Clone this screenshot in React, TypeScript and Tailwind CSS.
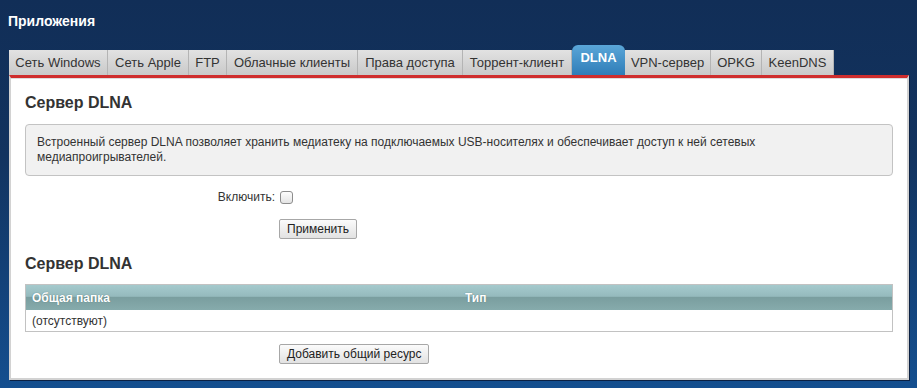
const tabs: { label: string; w: string; active?: boolean }[] = [
  { label: "Сеть Windows", w: "w-[99px]" },
  { label: "Сеть Apple", w: "w-[81px]" },
  { label: "FTP", w: "w-[38px]" },
  { label: "Облачные клиенты", w: "w-[131px]" },
  { label: "Права доступа", w: "w-[105px]" },
  { label: "Торрент-клиент", w: "w-[109px]" },
  { label: "DLNA", w: "w-[53px]", active: true },
  { label: "VPN-сервер", w: "w-[86px]" },
  { label: "OPKG", w: "w-[51px]" },
  { label: "KeenDNS", w: "w-[72px]" },
];

function Btn({ children }: { children: React.ReactNode }) {
  return (
    <button
      type="button"
      className="h-[20px] rounded-[2px] border border-[#a7a7a7] bg-[linear-gradient(to_bottom,#fbfbfb,#e2e2e2)] px-[7px] text-[12px] leading-[18px] text-[#222]"
    >
      {children}
    </button>
  );
}

export default function App() {
  return (
    <div className="h-[388px] w-[917px] overflow-hidden bg-[linear-gradient(to_bottom,#112e57_0%,#12335f_40%,#144f8f_100%)] pl-[9px] pr-[8px] font-['Liberation_Sans',Arial,sans-serif] text-[#333]">
      <h1 className="-ml-[1px] pt-[12px] text-[14px] font-bold leading-[18px] text-white">
        Приложения
      </h1>

      <div className="mt-[15px] flex h-[30px] items-end">
        {tabs.map((t) =>
          t.active ? (
            <div
              key={t.label}
              className={`${t.w} flex h-[30px] items-center justify-center rounded-t-[6px] bg-[linear-gradient(to_bottom,#5aa6d8,#2f7db8)] pb-[4px] text-[13px] font-bold text-white`}
            >
              {t.label}
            </div>
          ) : (
            <div
              key={t.label}
              className={`${t.w} flex h-[25px] items-center justify-center border-r border-[#b4b4b4] bg-[linear-gradient(to_bottom,#e2e2e2,#c9c9c9)] text-[13px] text-[#333]`}
            >
              {t.label}
            </div>
          ),
        )}
      </div>

      <div className="h-[305px] border-x-2 border-b-2 border-t-[3px] border-x-[#d2d2d2] border-b-[#d2d2d2] border-t-[#cf2d2d] bg-white shadow-[1px_1px_0_#0b2143]">
        <div className="h-full border-t border-[#dcdcdc] px-[14px]">
          <h2 className="pt-[14px] text-[16px] font-bold leading-[20px]">Сервер DLNA</h2>

          <div className="mt-[11px] rounded-[4px] border border-[#c3c3c3] bg-[#f1f1f1] px-[11px] py-[10px] text-[12px] leading-[15px]">
            Встроенный сервер DLNA позволяет хранить медиатеку на подключаемых USB-носителях и обеспечивает доступ к ней сетевых
            медиапроигрывателей.
          </div>

          <div className="mt-[14px] flex h-[14px] items-center text-[12px]">
            <span className="w-[250px] text-right">Включить:</span>
            <span className="ml-[5px] h-[13px] w-[13px] rounded-[3px] border border-[#8d8d8d] bg-[linear-gradient(to_bottom,#fdfdfd,#e4e4e4)]" />
          </div>

          <div className="ml-[254px] mt-[15px] flex">
            <Btn>Применить</Btn>
          </div>

          <h2 className="mt-[15px] text-[16px] font-bold leading-[20px]">Сервер DLNA</h2>

          <div className="mt-[10px] border border-[#c2c2c2] text-[12px]">
            <div className="grid h-[25px] grid-cols-2 items-center bg-[linear-gradient(to_bottom,#a5cacd_0%,#95babd_45%,#7a9e9f_50%,#86abac_100%)] text-[12px] font-bold text-white [text-shadow:0_0_1px_#4d6e70]">
              <span className="px-[6px]">Общая папка</span>
              <span className="px-[6px]">Тип</span>
            </div>
            <div className="flex h-[21px] items-center px-[6px]">(отсутствуют)</div>
          </div>

          <div className="ml-[254px] mt-[12px] flex">
            <Btn>Добавить общий ресурс</Btn>
          </div>
        </div>
      </div>
    </div>
  );
}
